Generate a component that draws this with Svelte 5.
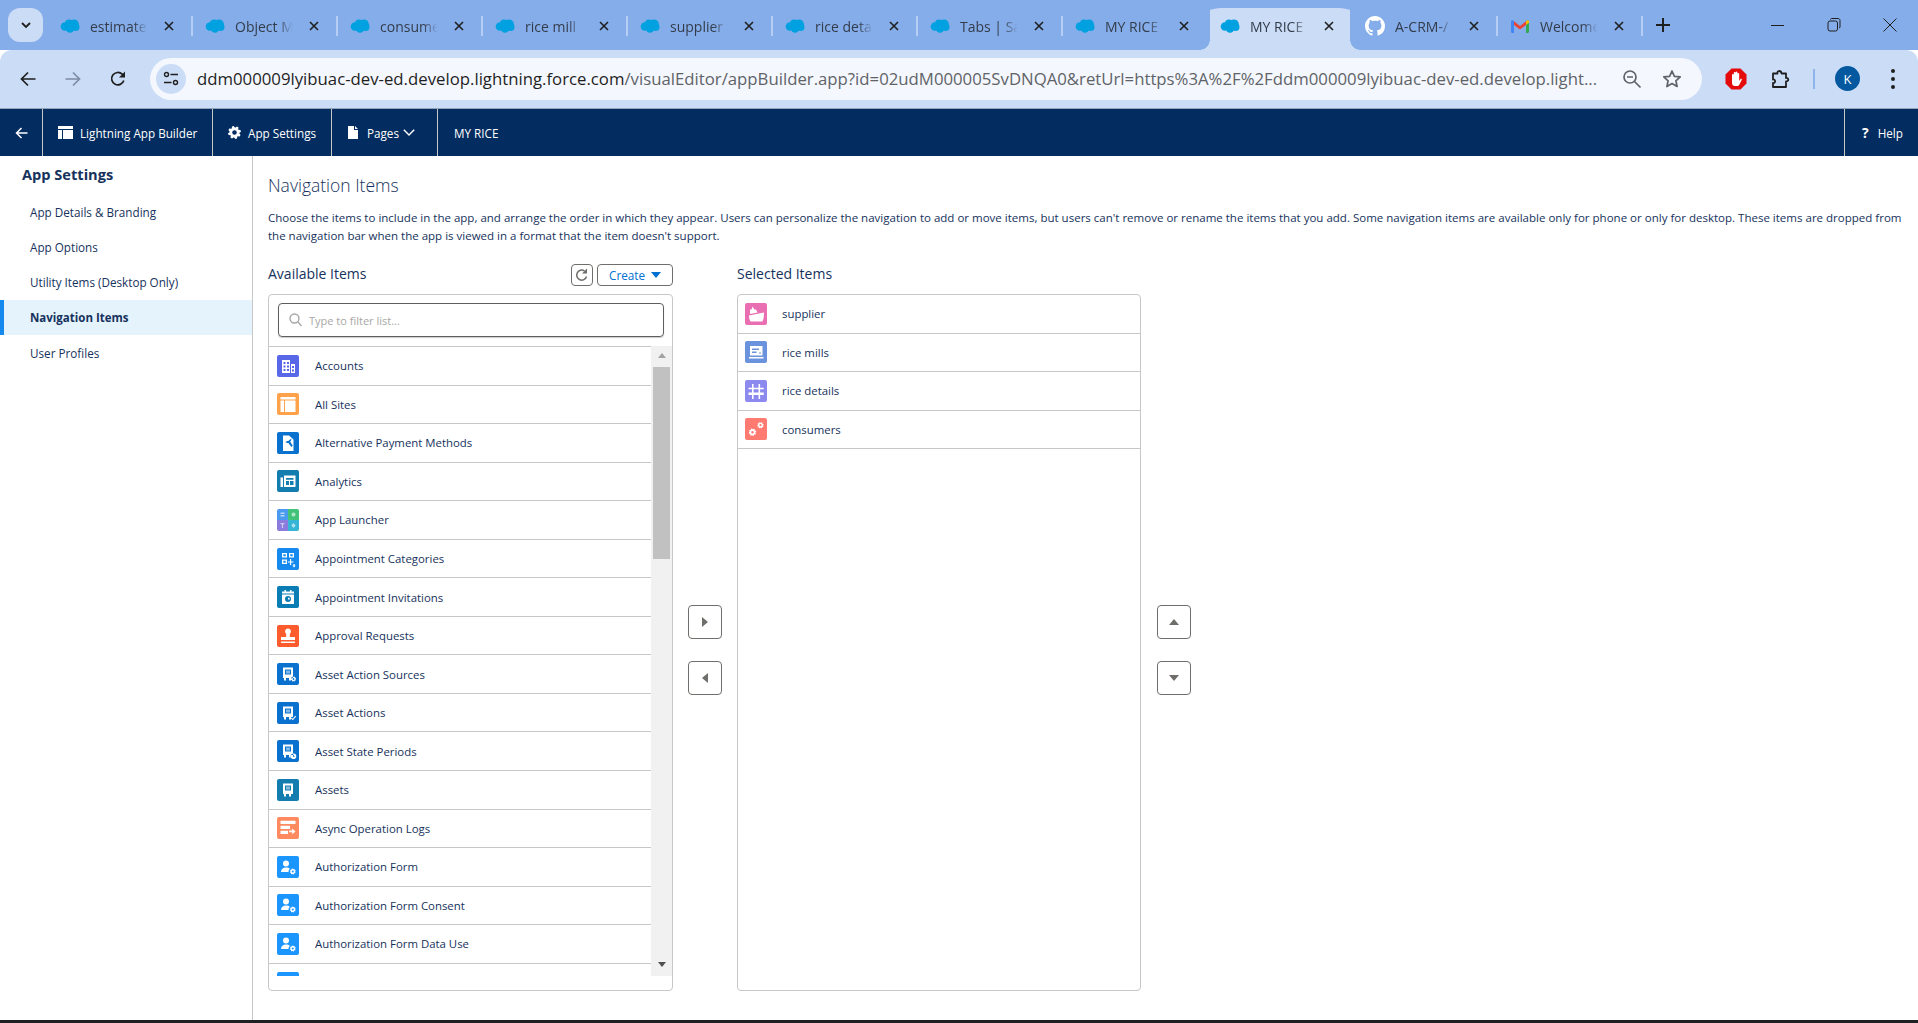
<script>
  // builds a toothed gear outline with a punched centre, used by a few icons
  function gear(cx, cy, r, hole = r * 0.34) {
    let d = '';
    for (let i = 0; i < 24; i++) {
      const a = (i / 24) * Math.PI * 2;
      const rad = i % 3 === 0 ? r * 0.72 : r;
      d += `${i ? 'L' : 'M'}${(cx + Math.cos(a + 0.13) * rad).toFixed(2)} ${(cy + Math.sin(a + 0.13) * rad).toFixed(2)}`;
    }
    return `${d}z M${cx - hole} ${cy}a${hole} ${hole} 0 1 0 ${hole * 2} 0a${hole} ${hole} 0 1 0 ${-hole * 2} 0z`;
  }

  const person = 'M9 4.5a3 3 0 1 1 0 6a3 3 0 0 1 0-6z M4 16c0-3 2-4.5 5-4.5c1.800 0 3 .4 3.800 1.200c-.8.8-1.300 1.900-1.300 3.300z';
  const safe = 'M6 4.500h10v10.500H6z M8 6.500h6v5H8z M9.500 7.500h1v3h-1z M11.500 7.500h1v3h-1z M7 15h2v2.500H7z M12 15h2v2.500h-2z';

  const icons = {
    accounts: { bg: '#5867e8', d: 'M5 5h8v13H5z M14 9h4v9h-4z M6.500 7h2v2h-2z M10 7h2v2h-2z M6.500 10.500h2v2h-2z M10 10.500h2v2h-2z M6.500 14h2v2h-2z M10 14h2v2h-2z M15 11h2v2h-2z M15 14.500h2v2h-2z' },
    sites: { bg: '#ffa24b', d: 'M3.500 4h15v2.500h-15z M3.500 7.500H7V19H3.500z M8 7.500h10.500V19H8z' },
    payment: { bg: '#0a72ce', d: 'M6 3.500h6l4.500 4V19H6z M12.500 8l1.800-1.400c.2 1.300-.2 2.300-1.200 3l2.700 4.200-1.500 1.200-2.800-4.100c-1.200.3-2.300 0-3-1l1.800-1 .9.200z' },
    analytics: { bg: '#147db0', d: 'M7 5.500h11.500V17H7z M9 8h7.500v1.800H9z M9 11h3v4H9z M13 11h3.500v4H13z M3.500 7.500H6V17H3.500z' },
    catalog: { bg: '#1589ee', d: 'M5 5h5v4.500H5z M6.300 6.200h2.400v2.100H6.300z M12 5h5v4.500h-5z M13.300 6.200h2.400v2.100h-2.400z M5 11.500h5V16H5z M6.300 12.700h2.400v2.100H6.300z M13 11h1.200v2.400h2.300v1.200h-2.300V17H13v-2.400h-2v-1.200h2z M16.500 16h1.200v1.500h1L17 19.500l-1.700-2h1.200z' },
    invite: { bg: '#0b7db5', d: 'M5 5.500h2.500V4H9v1.500h4V4h1.500v1.500H17v2H5z M5 8.500h12V18H5z M11 10a3 3 0 1 0 0 6a3 3 0 0 0 0-6z M11 11.500v2h2a2 2 0 0 0-2-2z' },
    approval: { bg: '#fe5c2c', d: 'M11 3.500a3 3 0 0 1 1.800 5.400V12h5.200v3H4v-3h5.200V8.900A3 3 0 0 1 11 3.500z M4 16.500h14V18H4z' },
    assetSource: { bg: '#0a72ce', d: `${safe} ${gear(16.5, 16, 2.6)}` },
    assetAction: { bg: '#0a72ce', d: `${safe} M14.500 15.500l1.300 1.300 2.500-3 .8.700-3.300 3.800-2-2z` },
    assetPeriod: { bg: '#0a72ce', d: `${safe} M16.500 13.500a2.800 2.800 0 1 1 0 5.600a2.800 2.800 0 0 1 0-5.600z M16 14.800v2h1.600v-.8H16.800v-1.200z` },
    asset: { bg: '#147db0', d: safe },
    async: { bg: '#ff8a5f', d: 'M3.500 3.800h15v3.200h-15z M3.500 8.800h9.500V12H3.500z M3.500 13.800H11V17H3.500z M15.200 11.500l3.300 2.900-3.300 2.900v-2.100H12v-1.600h3.200z' },
    auth: { bg: '#1b96ff', d: `${person} ${gear(15.8, 15.5, 3)}` },
    supplier: { bg: '#e96fb2', d: 'M7.500 3.500l2 3h1.500l1.500 3L5 11V6.500h1.500z M4 12.500L19 9.500c0 4-.5 7-1.500 9H5.500C4.500 17 4 15 4 12.500z' },
    mills: { bg: '#6b92dc', d: 'M5 5h12.500v9.500H5z M7 7.500h7v1.500H7z M7 10.500h4.500V12H7z M14 11.500h2v1h-2z M4 16h14.500v1.500H4z' },
    details: { bg: '#8c8aef', d: 'M7 4h1.600v3.800H7z M13.500 4h1.600v3.800h-1.600z M3.500 7.800h15.200v1.400H3.500z M7 9.200h1.600v3.300H7z M13.500 9.200h1.600v3.300h-1.600z M3.500 12.500h15.200V15H3.500z M7 15h1.600v4H7z M13.500 15h1.600v4h-1.600z' },
    consumers: { bg: '#ff7b72', d: `${gear(7.5, 14.2, 3.800)} ${gear(15.5, 7.2, 3.200)}` }
  };

  const tabs = [
    { title: 'estimate', kind: 'cloud' },
    { title: 'Object M', kind: 'cloud' },
    { title: 'consume', kind: 'cloud' },
    { title: 'rice mill', kind: 'cloud' },
    { title: 'supplier', kind: 'cloud' },
    { title: 'rice deta', kind: 'cloud' },
    { title: 'Tabs | Sa', kind: 'cloud' },
    { title: 'MY RICE', kind: 'cloud', nosep: true },
    { title: 'MY RICE', kind: 'cloud', active: true, nosep: true },
    { title: 'A-CRM-/', kind: 'github' },
    { title: 'Welcome', kind: 'gmail' }
  ];

  const settings = ['App Details & Branding', 'App Options', 'Utility Items (Desktop Only)', 'Navigation Items', 'User Profiles'];

  const available = [
    ['Accounts', 'accounts'],
    ['All Sites', 'sites'],
    ['Alternative Payment Methods', 'payment'],
    ['Analytics', 'analytics'],
    ['App Launcher', 'launcher'],
    ['Appointment Categories', 'catalog'],
    ['Appointment Invitations', 'invite'],
    ['Approval Requests', 'approval'],
    ['Asset Action Sources', 'assetSource'],
    ['Asset Actions', 'assetAction'],
    ['Asset State Periods', 'assetPeriod'],
    ['Assets', 'asset'],
    ['Async Operation Logs', 'async'],
    ['Authorization Form', 'auth'],
    ['Authorization Form Consent', 'auth'],
    ['Authorization Form Data Use', 'auth'],
    ['', 'auth']
  ];

  const selected = [
    ['supplier', 'supplier'],
    ['rice mills', 'mills'],
    ['rice details', 'details'],
    ['consumers', 'consumers']
  ];
</script>

{#snippet itemIcon(name)}
  {#if name === 'launcher'}
    <svg class="item-icon" viewBox="0 0 22 22">
      <rect width="11" height="11" fill="#4a9bf0" />
      <rect x="11" width="11" height="11" fill="#43c37a" />
      <rect y="11" width="11" height="11" fill="#8a7bdc" />
      <rect x="11" y="11" width="11" height="11" fill="#37b5d6" />
      <path d="M3.500 3.500h4v1.500h-4z M3.500 6h4v1.500h-4z M16.500 3.500a2 2 0 1 1 0 4a2 2 0 0 1 0-4z M3.500 14h4v1.200H6.100V19H4.900v-3.800H3.500z M16.500 14l2.200 2.500-2.200 2.500-2.200-2.500z" fill="#fff" opacity="0.6" />
    </svg>
  {:else}
    <svg class="item-icon" viewBox="0 0 22 22" style="background:{icons[name].bg}">
      <path d={icons[name].d} fill="#fff" fill-rule="evenodd" />
    </svg>
  {/if}
{/snippet}

{#snippet row(label, name)}
  <div class="row">
    {@render itemIcon(name)}
    <span>{label}</span>
  </div>
{/snippet}

{#snippet favicon(kind)}
  {#if kind === 'github'}
    <svg class="fav" viewBox="0 0 16 16"><path fill="#fff" d="M8 0C3.580 0 0 3.580 0 8c0 3.540 2.290 6.530 5.470 7.590.4.070.55-.17.55-.38 0-.19-.01-.82-.01-1.490-2.010.37-2.530-.49-2.690-.94-.09-.23-.48-.94-.82-1.130-.28-.15-.68-.52-.01-.53.63-.01 1.080.58 1.230.82.72 1.210 1.870.87 2.330.66.07-.52.28-.87.51-1.070-1.780-.2-3.640-.89-3.640-3.950 0-.87.31-1.590.82-2.150-.08-.2-.36-1.020.08-2.120 0 0 .67-.21 2.200.82.64-.18 1.320-.27 2-.27.68 0 1.360.09 2 .27 1.530-1.040 2.200-.82 2.200-.82.44 1.100.16 1.920.08 2.120.51.56.82 1.270.82 2.150 0 3.070-1.870 3.750-3.650 3.950.29.25.54.73.54 1.480 0 1.070-.01 1.930-.01 2.200 0 .21.15.46.55.38A8.013 8.013 0 0016 8c0-4.420-3.580-8-8-8z" /></svg>
  {:else if kind === 'gmail'}
    <svg class="fav" viewBox="0 0 20 20">
      <path fill="#4285f4" d="M1 5.500c0-1 1-1.500 2-1l1 .8V17H2.200C1.500 17 1 16.500 1 15.800z" />
      <path fill="#34a853" d="M19 5.500c0-1-1-1.500-2-1l-1 .8V17h1.800c.7 0 1.200-.5 1.200-1.200z" />
      <path fill="#ea4335" d="M4 5.300L10 10l6-4.700v3.600L10 13.400 4 8.900z" />
      <path fill="#fbbc04" d="M16 5.300l1-.8c1-.5 2 0 2 1v1.200l-3 2.200z" />
    </svg>
  {:else}
    <svg class="fav" viewBox="0 0 20 14" fill="#00a1e0">
      <circle cx="5" cy="7.500" r="4.300" />
      <circle cx="9" cy="4.500" r="4" />
      <circle cx="14" cy="5.200" r="4.800" />
      <circle cx="15.500" cy="8" r="4" />
      <circle cx="10" cy="9.500" r="4.200" />
    </svg>
  {/if}
{/snippet}

<div class="page">
  <div class="tabstrip">
    <button class="tab-search" aria-label="Search tabs">
      <svg width="12" height="12" viewBox="0 0 12 12"><path d="M2 4l4 4 4-4" fill="none" stroke="#1f1f1f" stroke-width="1.800" /></svg>
    </button>
    <div class="tabs">
      {#each tabs as tab}
        <div class="tab" class:active={tab.active} class:nosep={tab.nosep}>
          {@render favicon(tab.kind)}
          <span class="tab-title">{tab.title}</span>
          <svg class="tab-close" width="10" height="10" viewBox="0 0 10 10"><path d="M1 1l8 8M9 1L1 9" stroke="#1f1f1f" stroke-width="1.600" /></svg>
        </div>
      {/each}
    </div>
    <button class="new-tab" aria-label="New tab">
      <svg width="14" height="14" viewBox="0 0 14 14"><path d="M7 0v14M0 7h14" stroke="#1f1f1f" stroke-width="2" /></svg>
    </button>
    <div class="window-controls">
      <div class="win"><svg width="14" height="14" viewBox="0 0 14 14"><path d="M0 7.500h13" stroke="#1f1f1f" /></svg></div>
      <div class="win"><svg width="14" height="14" viewBox="0 0 14 14"><rect x="1" y="3" width="9.500" height="10" rx="2" fill="none" stroke="#1f1f1f" /><path d="M3.500 1.500c0-.5.5-1 1-1h6.500c1.200 0 2 .8 2 2V9c0 .5-.5 1-1 1" fill="none" stroke="#1f1f1f" /></svg></div>
      <div class="win"><svg width="14" height="14" viewBox="0 0 14 14"><path d="M.5.500l13 13M13.500.500l-13 13" stroke="#1f1f1f" /></svg></div>
    </div>
  </div>

  <div class="toolbar">
    <div class="tool">
      <svg width="16" height="16" viewBox="0 0 16 16"><path d="M15.500 8H1.500M8 1.500L1.500 8 8 14.500" fill="none" stroke="#1f1f1f" stroke-width="1.700" /></svg>
    </div>
    <div class="tool">
      <svg width="16" height="16" viewBox="0 0 16 16"><path d="M.5 8h14M8 1.500L14.500 8 8 14.500" fill="none" stroke="#7d8ba3" stroke-width="1.700" /></svg>
    </div>
    <div class="tool">
      <svg width="16" height="16" viewBox="0 0 16 16"><path d="M13.800 9.500A6.200 6.200 0 1 1 12.200 3.200L14 5" fill="none" stroke="#1f1f1f" stroke-width="1.700" /><path d="M15 .5v6H9z" fill="#1f1f1f" /></svg>
    </div>
    <div class="omnibox">
      <div class="tune">
        <svg width="16" height="16" viewBox="0 0 16 16" fill="none" stroke="#1f1f1f" stroke-width="1.400"><circle cx="3.500" cy="3.500" r="2" /><path d="M7.500 3.500H15M1 11.500h7.500" /><circle cx="12.500" cy="11.500" r="2" /></svg>
      </div>
      <div class="url"><span class="host">ddm000009lyibuac-dev-ed.develop.lightning.force.com</span>/visualEditor/appBuilder.app?id=02udM000005SvDNQA0&retUrl=https%3A%2F%2Fddm000009lyibuac-dev-ed.develop.light...</div>
      <svg class="zoom-out" width="20" height="20" viewBox="0 0 20 20" fill="none" stroke="#5f6368" stroke-width="1.700"><circle cx="8" cy="8" r="6" /><path d="M12.500 12.500l6 6M5 8h6" /></svg>
      <svg class="star" width="20" height="20" viewBox="0 0 20 20"><path d="M10 2l2.400 5.300 5.800.6-4.300 3.900 1.200 5.700L10 14.600l-5.100 2.900 1.200-5.700L1.800 7.900l5.800-.6z" fill="none" stroke="#5f6368" stroke-width="1.700" stroke-linejoin="round" /></svg>
    </div>
    <div class="toolbar-right">
      <div class="tool">
        <svg width="22" height="22" viewBox="0 0 22 22">
          <path d="M6.500 .5h9l6 6v9l-6 6h-9l-6-6v-9z" fill="#e40b0b" />
          <path d="M7 10V6.500a1 1 0 0 1 1.800 0V10V4.500a1 1 0 0 1 1.800 0V10V4a1 1 0 0 1 1.800 0v6V5.500a1 1 0 0 1 1.800 0V13l1.200-1.800c.6-.8 1.800 0 1.300.8l-2.300 4.500c-.5 1-1.300 1.500-2.400 1.500H10c-1.800 0-3-1.300-3-3z" fill="#fff" />
        </svg>
      </div>
      <div class="tool">
        <svg width="20" height="20" viewBox="0 0 20 20"><path d="M2 4.500h4.500c-.8-2.800 3.500-3.800 4-.0H15v4.500c2.500-.8 3.500 3.300 0 3.500v5.500H2v-4c2.800.5 2.800-4 0-3.500z" fill="none" stroke="#1f1f1f" stroke-width="1.800" stroke-linejoin="round" /></svg>
      </div>
      <div class="divider"></div>
      <div class="avatar">K</div>
      <div class="tool dots"><i></i><i></i><i></i></div>
    </div>
  </div>

  <header class="appbar">
    <div class="bar-item back">
      <svg width="13" height="12" viewBox="0 0 13 12"><path d="M12.500 6H1.500M6.500 1L1.500 6l5 5" fill="none" stroke="#fff" stroke-width="1.500" /></svg>
    </div>
    <div class="bar-item builder">
      <svg width="15" height="13" viewBox="0 0 15 13"><path d="M0 0h15v3H0z M0 4h4v9H0z M5 4h10v9H5z" fill="#fff" /></svg>
      <span>Lightning App Builder</span>
    </div>
    <div class="bar-item app-settings">
      <svg width="13" height="13" viewBox="0 0 13 13"><path d={gear(6.5, 6.5, 6.500, 2.300)} fill="#fff" fill-rule="evenodd" /></svg>
      <span>App Settings</span>
    </div>
    <div class="bar-item pages">
      <svg width="10" height="13" viewBox="0 0 10 13"><path d="M0 0h6v4h4v9H0z M7 0l3 3H7z" fill="#fff" /></svg>
      <span>Pages</span>
      <svg width="12" height="7" viewBox="0 0 12 7"><path d="M.8.8L6 6l5.200-5.200" fill="none" stroke="#fff" stroke-width="1.400" /></svg>
    </div>
    <div class="bar-title">MY RICE</div>
    <div class="bar-help"><b>?</b><span>Help</span></div>
  </header>

  <div class="body">
    <aside class="sidebar">
      <h2>App Settings</h2>
      {#each settings as label}
        <div class="side-item" class:current={label === 'Navigation Items'}>{label}</div>
      {/each}
    </aside>

    <main class="content">
      <h1>Navigation Items</h1>
      <p class="intro">Choose the items to include in the app, and arrange the order in which they appear. Users can personalize the navigation to add or move items, but users can't remove or rename the items that you add. Some navigation items are available only for phone or only for desktop. These items are dropped from the navigation bar when the app is viewed in a format that the item doesn't support.</p>

      <div class="picker">
        <section class="column available">
          <div class="column-head">
            <span class="column-title">Available Items</span>
            <button class="refresh" aria-label="Refresh">
              <svg width="14" height="14" viewBox="0 0 14 14"><path d="M11.500 8.500A5 5 0 1 1 9.500 3" fill="none" stroke="#706e6b" stroke-width="1.500" /><path d="M12 .5v5H7z" fill="#706e6b" /></svg>
            </button>
            <button class="create">Create <i></i></button>
          </div>
          <div class="panel">
            <div class="filter">
              <div class="filter-input">
                <svg width="13" height="14" viewBox="0 0 13 14" fill="none" stroke="#a8a7a5" stroke-width="1.400"><circle cx="5.500" cy="5.500" r="4.500" /><path d="M9 9l3.500 4" /></svg>
                <span>Type to filter list...</span>
              </div>
            </div>
            <div class="list-wrap">
              <div class="list">
                {#each available as [label, name]}
                  {@render row(label, name)}
                {/each}
              </div>
              <div class="scrollbar">
                <i class="up"></i>
                <div class="thumb"></div>
                <i class="down"></i>
              </div>
            </div>
          </div>
        </section>

        <div class="moves">
          <button class="move" aria-label="Add"><svg width="8" height="12" viewBox="0 0 8 12"><path d="M1 1l6 5-6 5z" fill="#706e6b" /></svg></button>
          <button class="move" aria-label="Remove"><svg width="8" height="12" viewBox="0 0 8 12"><path d="M7 1L1 6l6 5z" fill="#706e6b" /></svg></button>
        </div>

        <section class="column chosen">
          <div class="column-head">
            <span class="column-title">Selected Items</span>
          </div>
          <div class="panel">
            {#each selected as [label, name]}
              {@render row(label, name)}
            {/each}
          </div>
        </section>

        <div class="moves">
          <button class="move" aria-label="Move up"><svg width="12" height="8" viewBox="0 0 12 8"><path d="M1 7l5-6 5 6z" fill="#706e6b" /></svg></button>
          <button class="move" aria-label="Move down"><svg width="12" height="8" viewBox="0 0 12 8"><path d="M1 1l5 6 5-6z" fill="#706e6b" /></svg></button>
        </div>
      </div>
    </main>
  </div>
  <div class="taskbar-edge"></div>
</div>

<style>
  :global(body) {
    margin: 0;
    background: #fff;
    font-family: "Open Sans", sans-serif;
    color: #16325c;
  }

  .page {
    width: 1918px;
    height: 1023px;
    display: flex;
    flex-direction: column;
    overflow: hidden;
  }

  button {
    padding: 0;
    font: inherit;
    background: none;
    border: none;
    display: flex;
    align-items: center;
    justify-content: center;
  }

  /* browser chrome */
  .tabstrip {
    height: 50px;
    flex: none;
    display: flex;
    background: #85adea;
    padding-left: 8px;
    box-sizing: border-box;
    position: relative;
    z-index: 1;
  }

  .tab-search {
    width: 35px;
    height: 34px;
    margin-top: 8px;
    background: #cbdcf6;
    border-radius: 12px;
  }

  .tabs {
    display: flex;
    margin-left: 4px;
  }

  .tab {
    width: 145px;
    height: 42px;
    margin-top: 8px;
    padding: 0 0 6px 13px;
    box-sizing: border-box;
    display: flex;
    align-items: center;
    position: relative;
    font-family: "Open Sans", sans-serif;
    font-size: 14px;
    color: #333c4a;
  }

  .tab::after {
    content: "";
    position: absolute;
    right: -1px;
    top: 8px;
    height: 20px;
    width: 2px;
    background: #b6cef3;
  }

  .tab.nosep::after {
    display: none;
  }

  .tab.active::before {
    content: "";
    position: absolute;
    left: -7px;
    right: -8px;
    top: 0;
    bottom: 0;
    background:
      radial-gradient(circle 10px at 0 calc(100% - 10px), transparent 9.500px, #cbdcf6 10px) left bottom / 10px 10px no-repeat,
      radial-gradient(circle 10px at 100% calc(100% - 10px), transparent 9.500px, #cbdcf6 10px) right bottom / 10px 10px no-repeat,
      linear-gradient(#cbdcf6, #cbdcf6) center / calc(100% - 20px) 100% no-repeat;
    border-radius: 22px 22px 0 0 / 12px 12px 0 0;
  }

  .tab > * {
    position: relative;
  }

  .fav {
    width: 20px;
    height: 20px;
    flex: none;
  }

  .tab-title {
    width: 60px;
    margin-left: 10px;
    white-space: nowrap;
    -webkit-mask-image: linear-gradient(to right, #000 72%, transparent 96%);
    mask-image: linear-gradient(to right, #000 72%, transparent 96%);
  }

  .tab-close {
    margin-left: 14px;
    flex: none;
  }

  .new-tab {
    width: 42px;
    height: 50px;
  }

  .window-controls {
    margin-left: auto;
    display: flex;
  }

  .win {
    width: 56px;
    height: 50px;
    display: flex;
    align-items: center;
    justify-content: center;
  }

  .toolbar {
    height: 59px;
    flex: none;
    box-sizing: border-box;
    display: flex;
    align-items: center;
    padding: 0 3px 1px 5px;
    background: #cbdcf6;
    border-bottom: 1px solid #98a4b8;
    border-radius: 12px 12px 0 0;
  }

  .tool {
    width: 45px;
    height: 42px;
    flex: none;
    display: flex;
    align-items: center;
    justify-content: center;
  }

  .omnibox {
    flex: 1;
    height: 42px;
    margin-left: 10px;
    padding: 0 20px 0 6px;
    display: flex;
    align-items: center;
    background: #f4f7fd;
    border-radius: 21px;
    min-width: 0;
  }

  .tune {
    width: 30px;
    height: 30px;
    flex: none;
    border-radius: 50%;
    background: #cbdcf6;
    display: flex;
    align-items: center;
    justify-content: center;
  }

  .url {
    flex: 1;
    margin-left: 11px;
    font-size: 16.760px;
    color: #5f6368;
    white-space: nowrap;
    overflow: hidden;
  }

  .host {
    color: #1f1f1f;
  }

  .zoom-out {
    flex: none;
    margin-right: 20px;
  }

  .star {
    flex: none;
  }

  .toolbar-right {
    display: flex;
    align-items: center;
    margin-left: 11px;
  }

  .divider {
    width: 2px;
    height: 20px;
    margin-left: 10px;
    background: #8fb4ea;
  }

  .avatar {
    width: 25px;
    height: 25px;
    margin: 0 10px 0 20px;
    border-radius: 50%;
    background: #04589f;
    color: #fff;
    font-size: 13px;
    display: flex;
    align-items: center;
    justify-content: center;
  }

  .dots {
    flex-direction: column;
    gap: 4px;
  }

  .dots i {
    width: 4px;
    height: 4px;
    border-radius: 50%;
    background: #1f1f1f;
  }

  /* lightning app builder bar */
  .appbar {
    height: 47px;
    flex: none;
    display: flex;
    align-items: stretch;
    background: #032d60;
    color: #fff;
    font-size: 11.700px;
  }

  .bar-item {
    display: flex;
    align-items: center;
    box-sizing: border-box;
    border-right: 1px solid #c9c7c5;
  }

  .back {
    width: 43px;
    padding-left: 15px;
  }

  .builder {
    width: 170px;
    padding-left: 15px;
    gap: 7px;
  }

  .app-settings {
    width: 119px;
    padding-left: 15px;
    gap: 7px;
  }

  .pages {
    width: 106px;
    padding-left: 16px;
    gap: 9px;
  }

  .pages svg:last-child {
    margin-left: -5px;
  }

  .bar-title {
    display: flex;
    align-items: center;
    padding-left: 16px;
  }

  .bar-help {
    margin-left: auto;
    width: 74px;
    box-sizing: border-box;
    border-left: 1px solid #c9c7c5;
    padding-left: 17px;
    display: flex;
    align-items: center;
    gap: 9px;
  }

  .bar-help b {
    font-size: 14px;
  }

  /* settings sidebar */
  .body {
    flex: 1;
    display: flex;
    min-height: 0;
  }

  .sidebar {
    width: 253px;
    flex: none;
    box-sizing: border-box;
    border-right: 1px solid #c9c7c5;
    font-size: 11.700px;
  }

  .sidebar h2 {
    height: 36px;
    margin: 0 0 2px;
    padding-left: 22px;
    display: flex;
    align-items: center;
    font-size: 14.600px;
    font-weight: 700;
  }

  .side-item {
    height: 35.300px;
    padding-left: 30px;
    display: flex;
    align-items: center;
  }

  .side-item.current {
    padding-left: 26px;
    border-left: 4px solid #1589ee;
    background: #e5f3fc;
    font-weight: 700;
    font-size: 11.500px;
  }

  /* main content */
  .content {
    flex: 1;
    min-width: 0;
    padding: 19px 8px 0 15px;
  }

  h1 {
    margin: 0;
    font-size: 17.500px;
    line-height: 20px;
    font-weight: 300;
  }

  .intro {
    margin: 14px 0 19px;
    font-size: 11.530px;
    line-height: 18px;
  }

  .picker {
    display: flex;
    align-items: flex-start;
  }

  .column-head {
    height: 30px;
    display: flex;
    align-items: flex-start;
  }

  .column-title {
    font-size: 14px;
    line-height: 20px;
    margin-right: auto;
  }

  .available {
    width: 405px;
  }

  .chosen {
    width: 404px;
    margin-left: 15px;
  }

  .refresh,
  .create {
    height: 22px;
    box-sizing: border-box;
    border: 1px solid #706e6b;
    border-radius: 4px;
    background: #fff;
  }

  .refresh {
    width: 22px;
  }

  .create {
    width: 76px;
    margin-left: 4px;
    gap: 6px;
    color: #0070d2;
    font-size: 11.700px;
  }

  .create i {
    border: 5px solid transparent;
    border-top: 6px solid #0070d2;
    border-bottom: none;
  }

  .panel {
    height: 697px;
    box-sizing: border-box;
    border: 1px solid #c9c7c5;
    border-radius: 4px;
    overflow: hidden;
  }

  .filter {
    height: 51px;
    padding: 8px 8px 0 9px;
    box-sizing: border-box;
  }

  .filter-input {
    height: 34px;
    box-sizing: border-box;
    border: 1px solid #5f5e5c;
    border-radius: 4px;
    box-shadow: 0 1px 1px rgba(0, 0, 0, 0.2);
    padding-left: 10px;
    display: flex;
    align-items: center;
    gap: 7px;
    color: #a8a7a5;
    font-size: 11px;
  }

  .list-wrap {
    height: 630px;
    display: flex;
    border-top: 1px solid #c9c7c5;
    box-sizing: border-box;
  }

  .list {
    flex: 1;
    overflow: hidden;
    min-width: 0;
  }

  .scrollbar {
    width: 21px;
    flex: none;
    background: #f1f1f1;
    margin-top: -1px;
    position: relative;
    display: flex;
    flex-direction: column;
    align-items: center;
  }

  .thumb {
    width: 17px;
    height: 192px;
    margin-top: 9px;
    background: #c1c1c1;
  }

  .up,
  .down {
    border: 4.500px solid transparent;
  }

  .up {
    margin-top: 7px;
    border-bottom: 5px solid #a3a3a3;
    border-top: none;
  }

  .down {
    margin-top: auto;
    margin-bottom: 9px;
    border-top: 5px solid #505050;
    border-bottom: none;
  }

  .row {
    height: 38.550px;
    flex: none;
    box-sizing: border-box;
    padding-left: 8px;
    display: flex;
    align-items: center;
    gap: 16px;
    border-bottom: 1px solid #c9c7c5;
    font-size: 11.400px;
  }

  .chosen .row {
    padding-left: 7px;
    gap: 15px;
  }

  .item-icon {
    width: 22px;
    height: 22px;
    flex: none;
    border-radius: 2px;
  }

  .moves {
    width: 34px;
    flex: none;
    margin-left: 15px;
    padding-top: 341px;
    display: flex;
    flex-direction: column;
    gap: 22px;
  }

  .chosen + .moves {
    margin-left: 16px;
  }

  .move {
    width: 34px;
    height: 34px;
    box-sizing: border-box;
    border: 1px solid #706e6b;
    border-radius: 4px;
    background: #fff;
  }

  .taskbar-edge {
    height: 3px;
    flex: none;
    background: #1f2022;
  }
</style>
